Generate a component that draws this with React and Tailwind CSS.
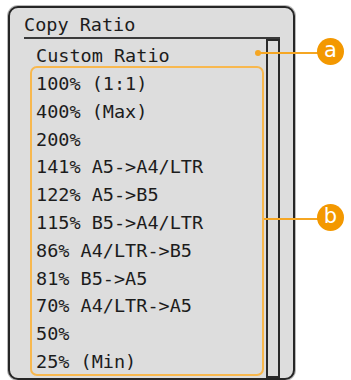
import React from "react";

const items = [
  "100% (1:1)",
  "400% (Max)",
  "200%",
  "141% A5->A4/LTR",
  "122% A5->B5",
  "115% B5->A4/LTR",
  "86% A4/LTR->B5",
  "81% B5->A5",
  "70% A4/LTR->A5",
  "50%",
  "25% (Min)",
];

function Callout({ letter, className }) {
  return (
    <div
      className={
        "absolute flex h-[27px] w-[27px] items-center justify-center rounded-full bg-[#f39800] text-[21px] leading-none text-white font-['DejaVu_Sans',sans-serif] " +
        className
      }
    >
      <span className="-mt-[3px]">{letter}</span>
    </div>
  );
}

export default function App() {
  return (
    <div className="relative h-[380px] w-[351px] overflow-hidden bg-white font-['DejaVu_Sans_Mono',monospace] text-[18.5px] text-[#1c1c1c]">
      <div className="ml-2 mt-[6px] flex h-[374px] w-[287px] flex-col rounded-[10px] border-2 border-[#262626] bg-[#dddddd] ring-1 ring-[#b9b9b9]">
        <div className="ml-[14px] flex w-[256px] flex-1 flex-col">
          <div className="h-[31px] shrink-0 border-b-2 border-[#3a3a3a] pt-[6px] leading-[21px]">
            Copy Ratio
          </div>
          <div className="flex flex-1">
            <div className="flex w-[242px] flex-col">
              <div className="h-[27px] shrink-0 pl-[12px] pt-[6px] leading-[21px]">
                Custom Ratio
              </div>
              <div className="ml-[6px] h-[310px] w-[234px] rounded-[7px] border-2 border-[#f8b84e] pl-[4px] pt-[2px]">
                {items.map((t) => (
                  <div key={t} className="h-[27.8px] leading-[27.8px] whitespace-pre">
                    {t}
                  </div>
                ))}
              </div>
            </div>
            <div className="w-[14px] border-2 border-[#2a2a2a]" />
          </div>
        </div>
      </div>

      {/* callout a */}
      <div className="absolute left-[255px] top-[50px] h-[6px] w-[6px] rounded-full bg-[#f5a623]" />
      <div className="absolute left-[258px] top-[52px] h-[2px] w-[62px] bg-[#f5a623]" />
      <Callout letter="a" className="left-[317px] top-[38px]" />

      {/* callout b */}
      <div className="absolute left-[264px] top-[218px] h-[2px] w-[56px] bg-[#f5a623]" />
      <Callout letter="b" className="left-[317px] top-[204px]" />
    </div>
  );
}
